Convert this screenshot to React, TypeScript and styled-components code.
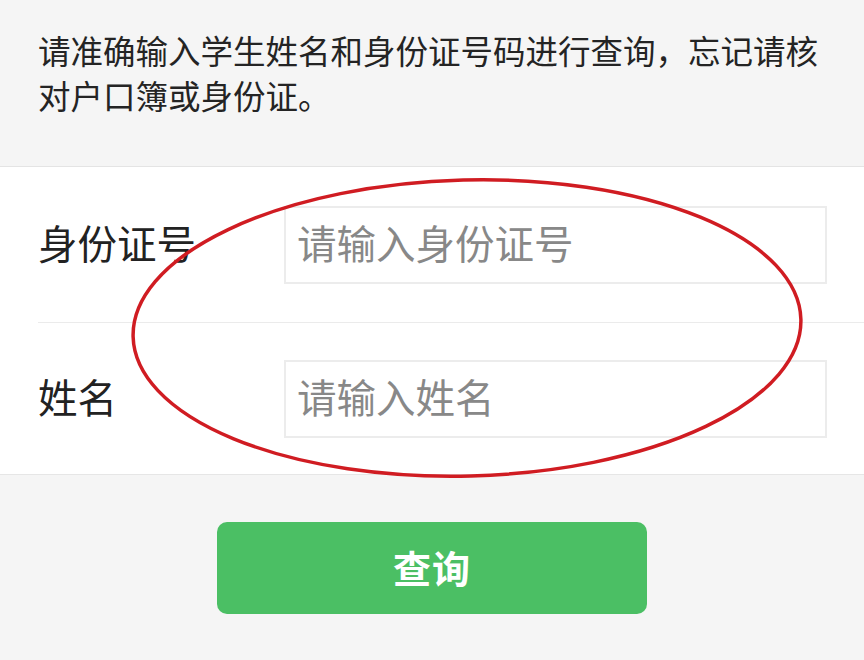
import styled, { createGlobalStyle } from "styled-components";

const GlobalStyle = createGlobalStyle`
  html, body {
    margin: 0;
    padding: 0;
    background: #f5f5f5;
  }
  body {
    font-family: "Noto Sans CJK SC", "Noto Sans", sans-serif;
  }
`;

const Page = styled.div`
  position: relative;
  width: 864px;
  height: 660px;
  overflow: hidden;
  background: #f5f5f5;
`;

const Notice = styled.p`
  margin: 0;
  padding: 27px 30px 49px 38px;
  font-size: 32.5px;
  line-height: 45px;
  color: #242424;
  border-bottom: 1px solid #e4e4e4;
`;

const Form = styled.div`
  background: #fff;
  border-bottom: 1px solid #e6e6e6;
`;

const Row = styled.div<{ $last?: boolean }>`
  display: flex;
  align-items: center;
  height: ${(p) => (p.$last ? "151px" : "155px")};
  margin-left: 38px;
  padding-right: 37px;
  border-bottom: ${(p) => (p.$last ? "none" : "1px solid #ebebeb")};
`;

const Label = styled.span`
  width: 246px;
  flex-shrink: 0;
  padding-bottom: 7px;
  font-size: 39.5px;
  color: #222;
`;

const Input = styled.input`
  flex: 1;
  height: 78px;
  box-sizing: border-box;
  border: 2px solid #ececec;
  padding: 0 0 6px 11px;
  font-family: "Noto Sans CJK SC", sans-serif;
  font-size: 39.5px;
  color: #222;
  outline: none;
  background: #fff;

  &::placeholder {
    color: #888;
  }
`;

const Actions = styled.div`
  display: flex;
  justify-content: center;
  padding-top: 47px;
`;

const SubmitButton = styled.button`
  width: 430px;
  height: 92px;
  padding-bottom: 4px;
  border: none;
  border-radius: 10px;
  background: #4bbf64;
  color: #fff;
  font-family: "Noto Sans CJK SC", sans-serif;
  font-size: 38px;
  font-weight: 700;
  letter-spacing: 1px;
`;

const Annotation = styled.svg`
  position: absolute;
  left: 0;
  top: 0;
  pointer-events: none;
`;

export default function App() {
  return (
    <Page>
      <GlobalStyle />
      <Notice>请准确输入学生姓名和身份证号码进行查询，忘记请核对户口簿或身份证。</Notice>
      <Form>
        <Row>
          <Label>身份证号</Label>
          <Input placeholder="请输入身份证号" />
        </Row>
        <Row $last>
          <Label>姓名</Label>
          <Input placeholder="请输入姓名" />
        </Row>
      </Form>
      <Actions>
        <SubmitButton>查询</SubmitButton>
      </Actions>
      <Annotation width="864" height="660" viewBox="0 0 864 660">
        <ellipse
          cx="467"
          cy="328"
          rx="334"
          ry="148"
          fill="none"
          stroke="#d01c22"
          strokeWidth="3.5"
          transform="rotate(-1.5 467 328)"
        />
      </Annotation>
    </Page>
  );
}
